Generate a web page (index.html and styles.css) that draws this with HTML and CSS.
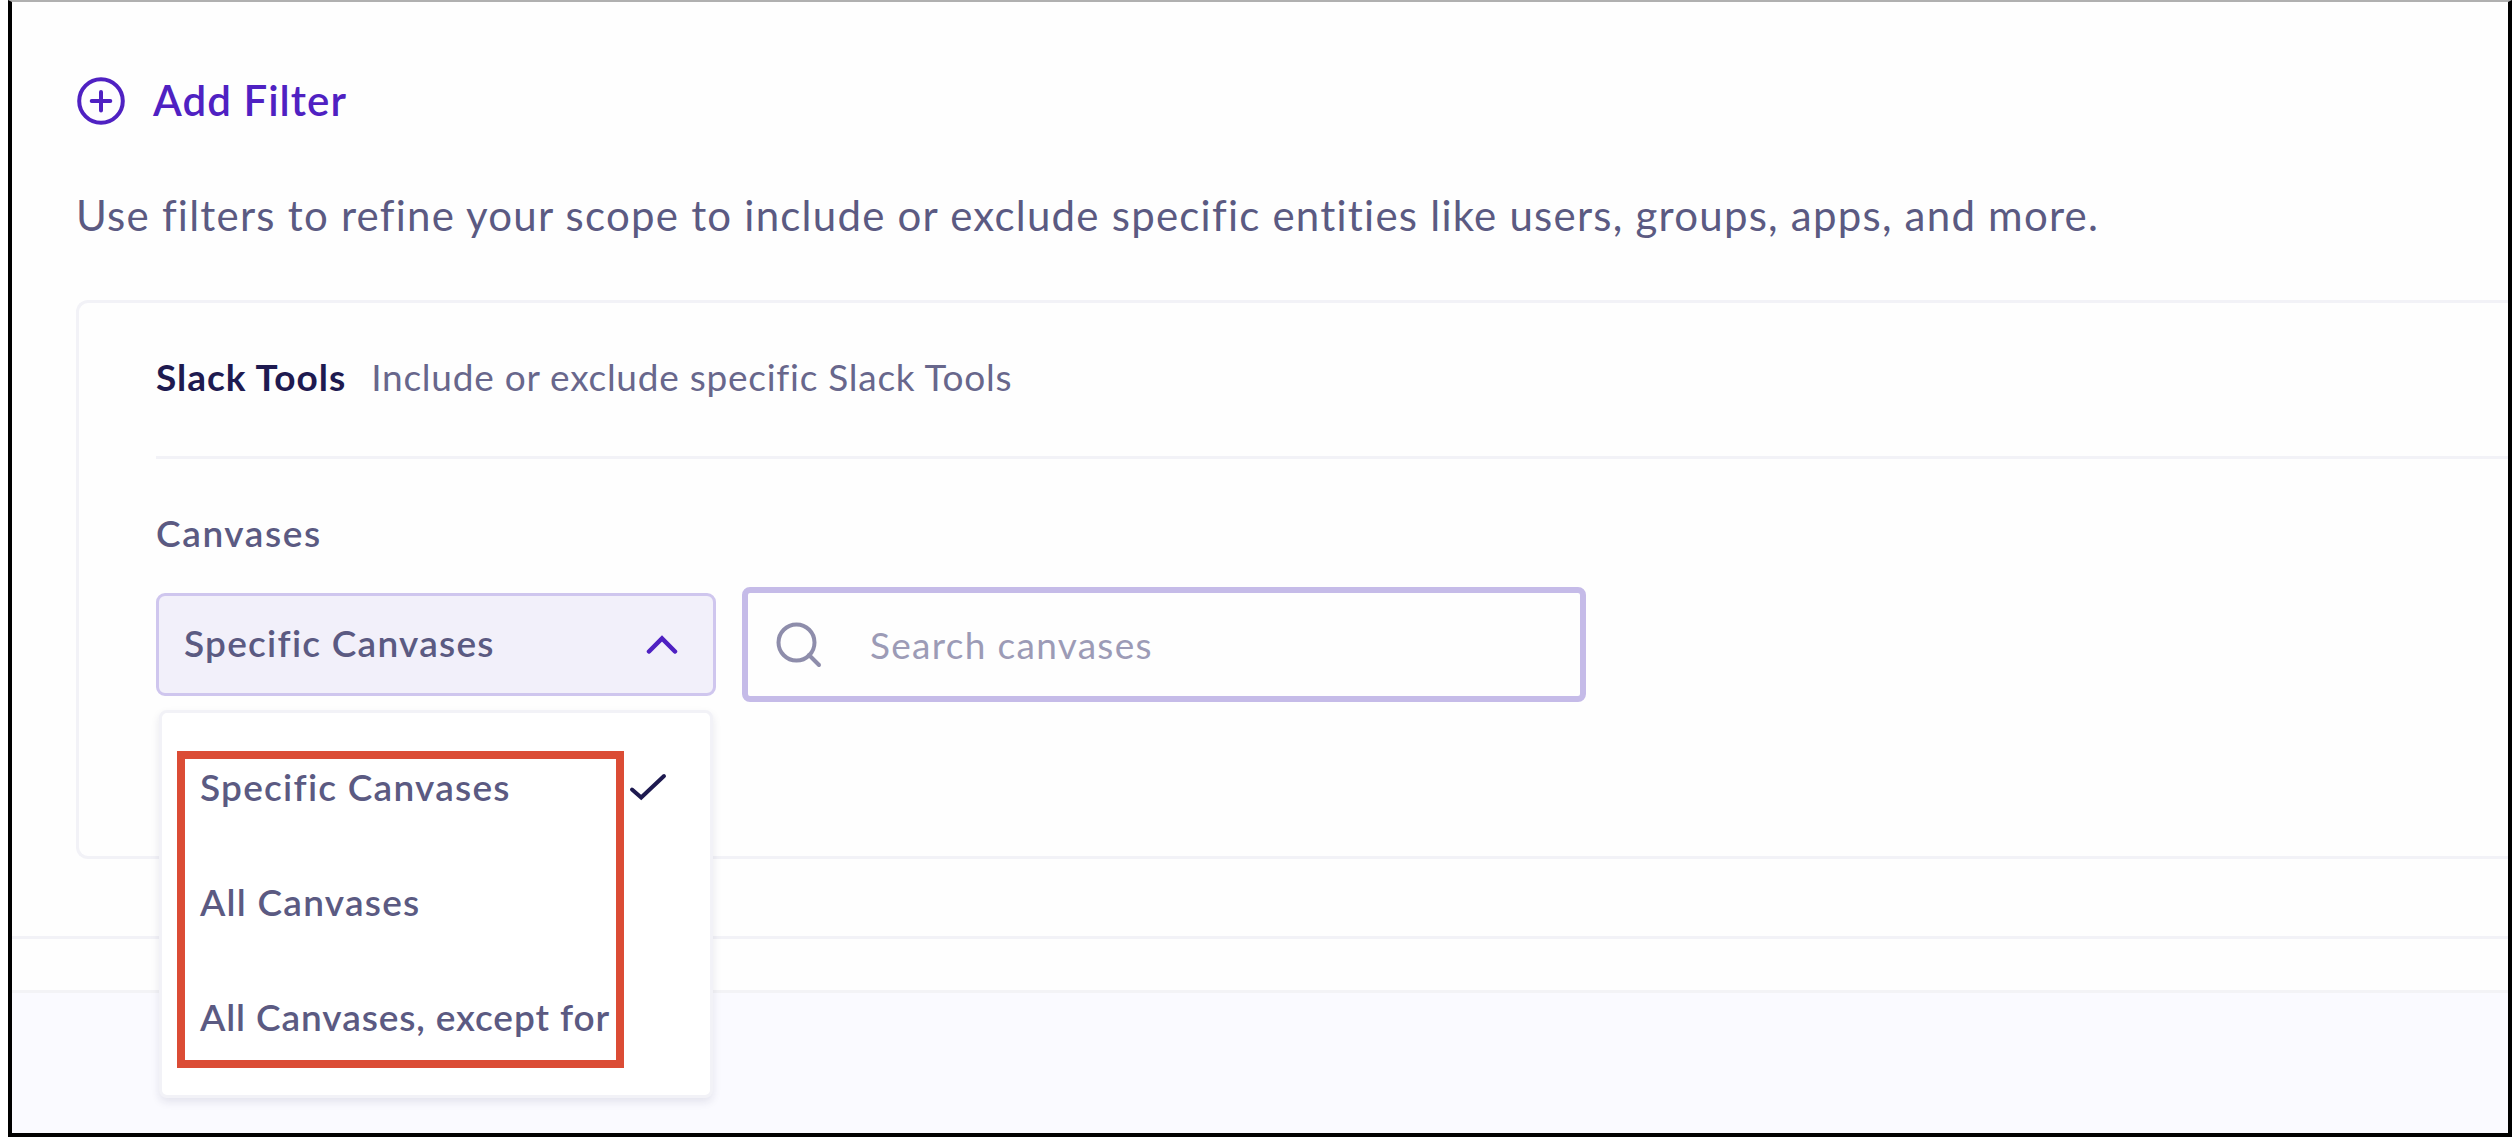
FILE: index.html
```
<!DOCTYPE html>
<html lang="en">
<head>
<meta charset="utf-8">
<title>Scope filters</title>
<link rel="stylesheet" href="styles.css">
</head>
<body>
<main class="frame">
  <section class="filters">
    <button class="add-filter" type="button">
      <svg class="add-icon" viewBox="0 0 48 48" aria-hidden="true"><circle cx="24" cy="24" r="21.8"/><path d="M24 15v18.500M14.700 24h18.600"/></svg>
      <span class="add-label">Add Filter</span>
    </button>
    <p class="description">Use filters to refine your scope to include or exclude specific entities like users, groups, apps, and more.</p>
    <div class="card">
      <header class="card-header">
        <strong class="card-title">Slack Tools</strong>
        <span class="card-hint">Include or exclude specific Slack Tools</span>
      </header>
      <div class="field-label">Canvases</div>
      <div class="controls">
        <div class="select">
          <span class="select-value">Specific Canvases</span>
          <svg class="chevron" viewBox="0 0 32 20" aria-hidden="true"><path d="M3 16.500 16 3.500l13 13"/></svg>
          <ul class="menu">
            <li class="option"><span class="option-specific">Specific Canvases</span>
              <svg class="check" viewBox="0 0 38 28" aria-hidden="true"><path d="M3 16.500 12.200 24.500 35 3"/></svg>
            </li>
            <li class="option"><span class="option-all">All Canvases</span></li>
            <li class="option"><span class="option-except">All Canvases, except for</span></li>
            <li class="highlight" aria-hidden="true"></li>
          </ul>
        </div>
        <label class="search">
          <svg class="search-icon" viewBox="0 0 46 46" aria-hidden="true"><circle cx="20.500" cy="20.500" r="18"/><path d="M33 33l10 10"/></svg>
          <span class="placeholder">Search canvases</span>
        </label>
      </div>
    </div>
  </section>
  <div class="spacer"></div>
  <footer class="footer"></footer>
</main>
</body>
</html>
```
FILE: styles.css
```
* { box-sizing: border-box; }

body {
  margin: 0;
  background: #fff;
  font-family: Lato, "Open Sans", sans-serif;
  color: #5b5a82;
}

.frame {
  display: flex;
  flex-direction: column;
  height: 1137px;
  margin-left: 8px;
  border: 4px solid #000;
  border-top: 2px solid #b0b0b0;
  background: #fefefe;
}

.filters {
  height: 937px;
  padding: 75px 0 0 64px;
  border-bottom: 3px solid #f2f2f7;
}

.add-filter {
  display: flex;
  align-items: center;
  gap: 28px;
  height: 48px;
  margin-left: 1px;
  padding: 0;
  border: 0;
  background: none;
  font: 600 42px/44px Lato, sans-serif;
  color: #4f21c2;
}

.add-icon {
  width: 48px;
  height: 48px;
  fill: none;
  stroke: currentColor;
  stroke-width: 4;
  stroke-linecap: round;
}

.add-label {
  padding-bottom: 2px;
  letter-spacing: 1.05px;
}

.description {
  margin: 66px 0 61px;
  font-size: 42px;
  line-height: 48px;
  letter-spacing: 1.23px;
  white-space: nowrap;
}

.card {
  height: 559px;
  padding-left: 77px;
  border: 3px solid #f2f2f7;
  border-right: 0;
  border-radius: 12px 0 0 12px;
  font-size: 37px;
  line-height: 46px;
}

.card-header {
  display: flex;
  align-items: center;
  gap: 25px;
  height: 156px;
  padding-bottom: 5px;
  border-bottom: 3px solid #f2f2f7;
}

.card-title {
  font-weight: 700;
  letter-spacing: 1px;
  color: #1e1a50;
}

.card-hint {
  letter-spacing: 0.75px;
  color: #68678c;
}

.field-label {
  margin: 51px 0 31px;
  font-weight: 600;
  letter-spacing: 1.6px;
}

.controls {
  display: flex;
  align-items: center;
  gap: 26px;
}

.select {
  position: relative;
  display: flex;
  align-items: center;
  justify-content: space-between;
  width: 560px;
  height: 103px;
  padding: 0 35px 0 25px;
  border: 3px solid #cfc6ee;
  border-radius: 9px;
  background: #f2f0fa;
  font-weight: 600;
}

.select-value {
  padding-bottom: 3px;
  letter-spacing: 1.25px;
}

.chevron {
  width: 32px;
  height: 20px;
  fill: none;
  stroke: #4f21c2;
  stroke-width: 4.5;
  stroke-linecap: round;
}

.search {
  display: flex;
  align-items: center;
  gap: 48px;
  width: 844px;
  height: 115px;
  padding-left: 28px;
  border: 6px solid #c5bbe8;
  border-radius: 8px;
}

.search-icon {
  width: 46px;
  height: 46px;
  fill: none;
  stroke: #8e8dab;
  stroke-width: 4;
  stroke-linecap: round;
}

.placeholder {
  letter-spacing: 1.3px;
  color: #9c9bb6;
}

.menu {
  position: absolute;
  top: 114px;
  left: 0;
  z-index: 1;
  width: 554px;
  height: 388px;
  margin: 0;
  padding: 16px 43px 0 38px;
  border: 3px solid #f2f2f7;
  border-radius: 8px;
  background: #fff;
  box-shadow: 0 4px 8px rgba(30, 26, 80, 0.1);
  list-style: none;
}

.option {
  display: flex;
  align-items: center;
  justify-content: space-between;
  height: 115.4px;
}

.option-specific,
.option-all { letter-spacing: 1.25px; }

.option-except { letter-spacing: 0.9px; }

.check {
  width: 38px;
  height: 28px;
  fill: none;
  stroke: #1e1a50;
  stroke-width: 4;
  stroke-linecap: round;
}

.highlight {
  position: absolute;
  top: 38px;
  left: 15px;
  width: 447px;
  height: 317px;
  border: 8px solid #db4c35;
}

.spacer {
  height: 54px;
  border-bottom: 3px solid #f3f3f6;
}

.footer {
  flex: 1;
  background: #fafaff;
}
```
